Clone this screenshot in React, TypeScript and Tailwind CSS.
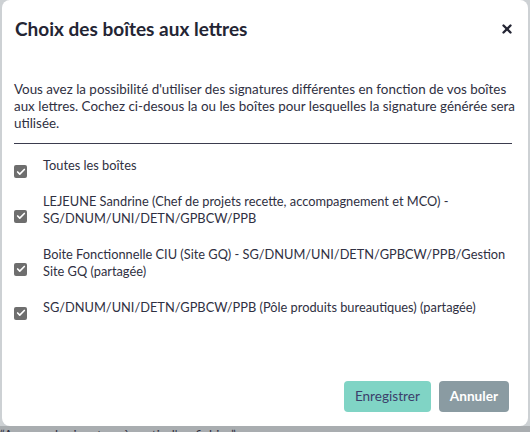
import { Check, X } from 'lucide-react'

const boxes = [
  'Toutes les boîtes',
  'LEJEUNE Sandrine (Chef de projets recette, accompagnement et MCO) - SG/DNUM/UNI/DETN/GPBCW/PPB',
  'Boite Fonctionnelle CIU (Site GQ) - SG/DNUM/UNI/DETN/GPBCW/PPB/Gestion Site GQ (partagée)',
  'SG/DNUM/UNI/DETN/GPBCW/PPB (Pôle produits bureautiques) (partagée)',
]

function CheckBox() {
  return (
    <span className="flex h-[13px] w-[13px] shrink-0 translate-y-[6px] items-center justify-center rounded-[2px] bg-[#6e6e6e]">
      <Check className="h-[10px] w-[10px] text-white" strokeWidth={4} />
    </span>
  )
}

export default function App() {
  return (
    <div className="relative h-[432px] w-[530px] overflow-hidden bg-[#cdd1d4] font-['Lato',sans-serif] text-[#2a2b3d]">
      {/* Modal */}
      <div className="ml-[2px] flex h-[426px] w-[526px] flex-col rounded-[8px] bg-white">
        <div className="flex items-center justify-between pl-[13px] pr-[14px] pt-[16px]">
          <h2 className="text-[19px] font-bold leading-[26px] text-[#242534]">Choix des boîtes aux lettres</h2>
          <X className="h-[14px] w-[14px] text-[#242534]" strokeWidth={4} />
        </div>

        <div className="pl-[12px] pr-[6px] pt-[39px]">
          <p className="text-[13.4px] leading-[17px] text-[#2f3042]">
            Vous avez la possibilité d'utiliser des signatures différentes en fonction de vos boîtes aux lettres. Cochez ci-desous la ou les boîtes pour lesquelles la signature générée sera utilisée.
          </p>
          <div className="mt-[11px] h-px w-[498px] bg-[#3b3c4e]" />

          <ul className="mt-[13px] flex flex-col gap-[18px]">
            {boxes.map((b) => (
              <li key={b} className="flex items-center gap-[16px]">
                <CheckBox />
                <span className="text-[12.8px] leading-[17.5px] text-[#2f3042]">{b}</span>
              </li>
            ))}
          </ul>
        </div>

        <div className="mt-auto flex justify-end gap-[8px] pb-[14px] pr-[19px]">
          <button className="h-[31px] rounded-[4px] bg-[#80d4c5] px-[11px] text-[13.6px] text-[#3c3f6b]">
            Enregistrer
          </button>
          <button className="h-[31px] rounded-[4px] bg-[#8a9ba2] px-[11px] text-[13.6px] font-bold text-white">
            Annuler
          </button>
        </div>
      </div>

      {/* page content behind the dialog */}
      <div className="whitespace-nowrap bg-[#a9adb0] pt-[2px] text-[13px] leading-[14px] text-[#2f3042]">
        “Apposer la signature à partir d'un fichier”
      </div>
    </div>
  )
}
